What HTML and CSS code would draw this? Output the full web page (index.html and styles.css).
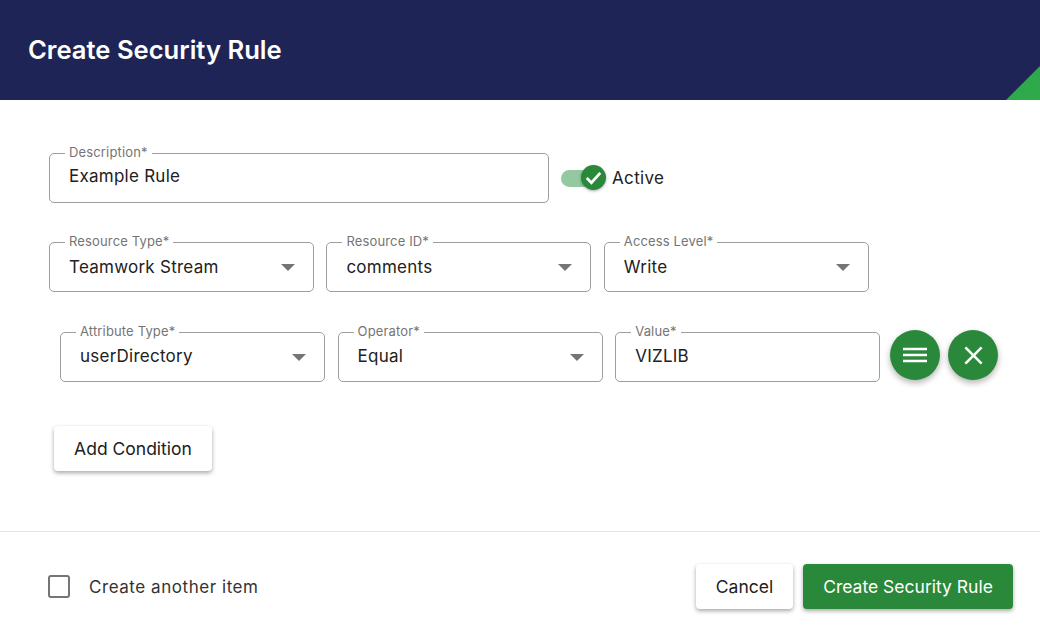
FILE: index.html
```html
<!DOCTYPE html>
<html lang="en">
<head>
<meta charset="utf-8">
<title>Create Security Rule</title>
<link rel="stylesheet" href="styles.css">
</head>
<body>
<div class="dialog">
  <header class="header">
    <h1 class="title">Create Security Rule</h1>
    <span class="corner"></span>
  </header>
  <main class="content">
    <div class="row row-description">
      <div class="field field-wide"><span class="label">Description*</span><span class="value">Example Rule</span></div>
      <div class="switch">
        <span class="track"></span>
        <span class="thumb"><svg viewBox="0 0 24 24" width="25" height="25"><path d="M5.500 12.500l4.500 4.500 8.500-9.500" fill="none" stroke="#fff" stroke-width="2.600"/></svg></span>
        <span class="switch-label">Active</span>
      </div>
    </div>
    <div class="row row-resource">
      <div class="field"><span class="label">Resource Type*</span><span class="value">Teamwork Stream</span><span class="arrow"></span></div>
      <div class="field"><span class="label">Resource ID*</span><span class="value">comments</span><span class="arrow"></span></div>
      <div class="field"><span class="label">Access Level*</span><span class="value">Write</span><span class="arrow"></span></div>
    </div>
    <div class="row row-condition">
      <div class="field"><span class="label">Attribute Type*</span><span class="value">userDirectory</span><span class="arrow"></span></div>
      <div class="field"><span class="label">Operator*</span><span class="value">Equal</span><span class="arrow"></span></div>
      <div class="field"><span class="label">Value*</span><span class="value">VIZLIB</span></div>
      <button class="fab fab-menu" aria-label="Menu"><svg viewBox="0 0 24 24" width="32" height="32"><path d="M3 6.500h18v2H3zM3 11h18v2H3zM3 15.500h18v2H3z" fill="#fff"/></svg></button>
      <button class="fab" aria-label="Remove"><svg viewBox="0 0 24 24" width="31" height="31"><path d="M19 6.410 17.590 5 12 10.590 6.410 5 5 6.410 10.590 12 5 17.590 6.410 19 12 13.410 17.590 19 19 17.590 13.410 12z" fill="#fff"/></svg></button>
    </div>
    <button class="btn btn-add">Add Condition</button>
  </main>
  <footer class="footer">
    <label class="check"><span class="box"></span><span class="check-label">Create another item</span></label>
    <div class="actions">
      <button class="btn btn-cancel">Cancel</button>
      <button class="btn btn-primary">Create Security Rule</button>
    </div>
  </footer>
</div>
</body>
</html>
```
FILE: styles.css
```css
* { box-sizing: border-box; }
html, body { margin: 0; height: 100%; overflow: hidden; background: #fff; }
body { font-family: Inter, "Liberation Sans", sans-serif; color: #212121; }
.dialog { width: 1040px; height: 636px; display: flex; flex-direction: column; }
.header { position: relative; height: 100px; flex: none; background: #1e2556; display: flex; align-items: center; padding-left: 28px; overflow: hidden; }
.title { margin: 0; font-size: 25.600px; font-weight: 600; line-height: 1; color: #fff; }
.corner { position: absolute; right: 0; bottom: 0; width: 34px; height: 34px; background: #2eaa4a; clip-path: polygon(100% 0, 100% 100%, 0 100%); }
.content { height: 431px; flex: none; padding-top: 53px; }
.row { display: flex; }
.row-description { padding-left: 49px; align-items: center; }
.row-resource { padding-left: 49px; margin-top: 39px; gap: 12.400px; }
.row-condition { padding-left: 60px; margin-top: 40px; gap: 12.600px; align-items: center; }
.field { position: relative; width: 265px; height: 50px; border: 1px solid #9e9e9e; border-radius: 5px; display: flex; align-items: center; padding: 0 19px; }
.field-wide { width: 500px; padding-bottom: 4px; }
.row-condition .field { padding-bottom: 2px; }
.label { position: absolute; left: 15px; top: -9px; padding: 0 4px; background: #fff; font-size: 13px; line-height: 15px; letter-spacing: .15px; color: #757575; white-space: nowrap; }
.value { font-size: 17px; line-height: 20px; letter-spacing: .25px; white-space: nowrap; }
.arrow { position: absolute; right: 18px; top: 21px; width: 0; height: 0; border-left: 7px solid transparent; border-right: 7px solid transparent; border-top: 7px solid #757575; }
.switch { position: relative; display: flex; align-items: center; margin-left: 12px; height: 26px; }
.track { width: 30px; height: 17px; border-radius: 9px; background: #94c8a0; }
.thumb { position: absolute; left: 20px; top: 0; width: 25px; height: 25px; border-radius: 50%; background: #2a883b; box-shadow: 0 1px 3px rgba(0,0,0,.35); display: flex; align-items: center; justify-content: center; }
.switch-label { margin-left: 21px; font-size: 17px; letter-spacing: .35px; }
.fab { width: 50px; height: 50px; border: 0; border-radius: 50%; padding: 0; background: #2a883b; box-shadow: 0 3px 6px rgba(0,0,0,.3); display: flex; align-items: center; justify-content: center; margin: -4px 0 0 -4.600px; }
.fab-menu { margin-left: -2.600px; }
.btn { border: 0; border-radius: 4px; height: 45px; font-family: inherit; font-size: 17.500px; font-weight: 400; background: #fff; color: #212121; box-shadow: 0 2px 4px rgba(0,0,0,.35); padding: 0; }
.btn-add { display: block; width: 158px; margin: 44px 0 0 54px; }
.footer { flex: 1; border-top: 1px solid #e2e2ea; display: flex; align-items: center; justify-content: space-between; padding: 5px 27px 0 48px; }
.check { display: flex; align-items: center; }
.box { width: 22px; height: 23px; border: 2px solid #757575; border-radius: 3px; }
.check-label { margin-left: 19px; font-size: 17px; letter-spacing: .55px; color: #333; }
.actions { display: flex; gap: 10px; }
.btn-cancel { width: 97px; }
.btn-primary { width: 210px; background: #2a883b; color: #fff; }
```
